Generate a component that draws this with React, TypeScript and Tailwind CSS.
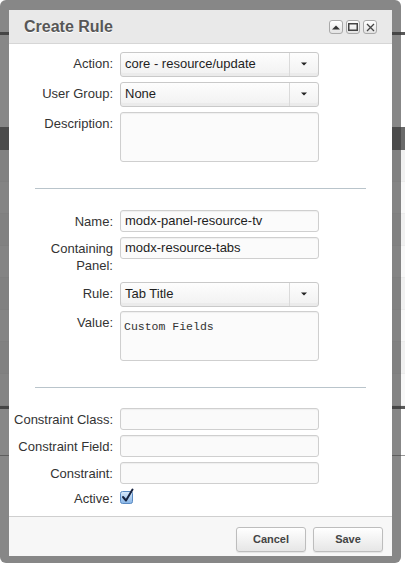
import React from 'react'

const font = { fontFamily: '"Liberation Sans", Arial, Helvetica, sans-serif' }

function Label({ children }: { children: React.ReactNode }) {
    return (
        <div className="w-[105px] shrink-0 pr-[1px] pt-[3px] text-right text-[13px] leading-[17px] text-[#333]">
            {children}
        </div>
    )
}

function Row({ label, children, className = '' }: { label: React.ReactNode; children: React.ReactNode; className?: string }) {
    return (
        <div className={`flex gap-[6px] ${className}`}>
            <Label>{label}</Label>
            {children}
        </div>
    )
}

function Select({ value }: { value: string }) {
    return (
        <div className="flex h-[25px] w-[199px] overflow-hidden rounded-[3px] border border-[#c9c9c9] bg-gradient-to-b from-[#fdfdfd] to-[#f1f1f1] shadow-[inset_0_-3px_0_#ebebeb]">
            <div className="flex-1 pl-[4px] pt-[2px] text-[13px] leading-[17px] text-[#1e1e1e]">{value}</div>
            <div className="flex w-[29px] items-center justify-center border-l border-[#dadada] pb-[1px]">
                <svg width="6" height="4" viewBox="0 0 6 4">
                    <path d="M0 0.5 L6 0.5 L3 3.5 Z" fill="#222" />
                </svg>
            </div>
        </div>
    )
}

function Input({ value = '', faint = false }: { value?: string; faint?: boolean }) {
    return (
        <div
            className={`h-[22px] w-[199px] rounded-[3px] border border-[#cfcfcf] pl-[4px] text-[13px] leading-[20px] text-[#1e1e1e] shadow-[inset_0_1px_1px_rgba(0,0,0,0.05)] ${faint ? 'bg-[#fafafa]' : 'bg-[#fbfbfb]'}`}
        >
            {value}
        </div>
    )
}

function TextArea({ value = '', h }: { value?: string; h: string }) {
    return (
        <div className={`${h} w-[199px] rounded-[3px] border border-[#cfcfcf] bg-[#fbfbfb] pl-[3px] pt-[1px] shadow-[inset_0_1px_1px_rgba(0,0,0,0.05)]`}>
            <span className="text-[11.5px] leading-[14px] text-[#333]" style={{ fontFamily: '"Liberation Mono", "Courier New", monospace' }}>
                {value}
            </span>
        </div>
    )
}

function ToolButton({ children }: { children: React.ReactNode }) {
    return (
        <div className="flex h-[14px] w-[14px] items-center justify-center rounded-[3px] border border-[#a9a9a9] bg-gradient-to-b from-white to-[#e3e3e3]">
            {children}
        </div>
    )
}

function Button({ children }: { children: React.ReactNode }) {
    return (
        <div className="flex h-[25px] w-[70px] items-center justify-center rounded-[3px] border border-[#bdbdbd] bg-gradient-to-b from-white to-[#e6e6e6] text-[11px] font-bold text-[#444] shadow-[0_1px_1px_rgba(0,0,0,0.08)]">
            {children}
        </div>
    )
}

function Background() {
    return (
        <div className="flex h-full w-full flex-col bg-white">
            <div className="h-[32px]" />
            <div className="h-[3px] bg-[#5a5a5a]" />
            <div className="h-[92px]" />
            <div className="h-[23px] bg-[#6a6a6a]" />
            {[0, 1, 2, 3, 4, 5, 6, 7].map((i) => (
                <div key={i} className={`h-[32px] border-b border-[#ececec] ${i % 2 ? 'bg-[#f8f8f8]' : 'bg-[#f1f1f1]'}`} />
            ))}
            <div className="h-[3px] bg-[#5a5a5a]" />
            <div className="h-[46px]" />
            <div className="h-[1px] bg-[#9a9a9a]" />
        </div>
    )
}

export default function App() {
    return (
        <div className="relative h-[567px] w-[405px] overflow-hidden" style={font}>
            <Background />

            <div className="absolute left-0 top-0 h-[563px] w-[401px] rounded-[6px] bg-[rgba(55,55,55,0.6)] pb-[7px] pl-[9px] pr-[9px] pt-[10px]">
                <div className="flex h-full w-full flex-col bg-white">
                    {/* header */}
                    <div className="flex h-[34px] items-center justify-between border-b border-[#d6d6d6] bg-[#e9e9e9] pl-[15px] pr-[15px]">
                        <div className="pt-[1px] text-[16px] font-bold text-[#575757] [text-shadow:0_1px_0_#fff]">Create Rule</div>
                        <div className="flex gap-[3px] pt-[1px]">
                            <ToolButton>
                                <svg width="8" height="5" viewBox="0 0 8 5">
                                    <path d="M0 4.5 L8 4.5 L4 0.5 Z" fill="#333" />
                                </svg>
                            </ToolButton>
                            <ToolButton>
                                <svg width="10" height="8" viewBox="0 0 10 8">
                                    <rect x="0.75" y="0.75" width="8.5" height="6.5" fill="none" stroke="#444" strokeWidth="1.5" />
                                </svg>
                            </ToolButton>
                            <ToolButton>
                                <svg width="9" height="9" viewBox="0 0 9 9">
                                    <path d="M1 1 L8 8 M8 1 L1 8" stroke="#444" strokeWidth="1.3" />
                                </svg>
                            </ToolButton>
                        </div>
                    </div>

                    {/* body */}
                    <div className="flex flex-1 flex-col pt-[8px]">
                        <Row label="Action:">
                            <Select value="core - resource/update" />
                        </Row>
                        <Row label="User Group:" className="mt-[5px]">
                            <Select value="None" />
                        </Row>
                        <Row label="Description:" className="mt-[5px]">
                            <TextArea h="h-[50px]" />
                        </Row>

                        <div className="mx-[26px] mt-[26px] h-[1px] bg-[#b9c4cb]" />

                        <Row label="Name:" className="mt-[21px]">
                            <Input value="modx-panel-resource-tv" />
                        </Row>
                        <Row label={<>Containing<br />Panel:</>} className="mt-[5px]">
                            <Input value="modx-resource-tabs" />
                        </Row>
                        <Row label="Rule:" className="mt-[8px]">
                            <Select value="Tab Title" />
                        </Row>
                        <Row label="Value:" className="mt-[4px]">
                            <TextArea value="Custom Fields" h="h-[50px]" />
                        </Row>

                        <div className="mx-[26px] mt-[26px] h-[1px] bg-[#b9c4cb]" />

                        <Row label="Constraint Class:" className="mt-[20px]">
                            <Input faint />
                        </Row>
                        <Row label="Constraint Field:" className="mt-[5px]">
                            <Input faint />
                        </Row>
                        <Row label="Constraint:" className="mt-[5px]">
                            <Input faint />
                        </Row>
                        <div className="mt-[6px] flex gap-[6px]">
                            <div className="w-[105px] shrink-0 pr-[1px] text-right text-[13px] leading-[17px] text-[#333]">Active:</div>
                            <svg width="15" height="16" viewBox="0 0 15 16" className="-mt-[2px]">
                                <defs>
                                    <linearGradient id="cb" x1="0" y1="0" x2="0" y2="1">
                                        <stop offset="0" stopColor="#d9eafb" />
                                        <stop offset="1" stopColor="#86b4e6" />
                                    </linearGradient>
                                </defs>
                                <rect x="0.5" y="3.5" width="12" height="12" rx="2" fill="url(#cb)" stroke="#5a8ac2" />
                                <path d="M3 9 L6 12.5 L12.5 1.5" fill="none" stroke="#16223f" strokeWidth="2" strokeLinecap="round" strokeLinejoin="round" />
                            </svg>
                        </div>
                    </div>

                    {/* footer */}
                    <div className="flex h-[40px] justify-end gap-[7px] border-t border-[#cfcfcf] bg-[#f7f7f7] pr-[9px] pt-[10px]">
                        <Button>Cancel</Button>
                        <Button>Save</Button>
                    </div>
                </div>
            </div>
        </div>
    )
}
